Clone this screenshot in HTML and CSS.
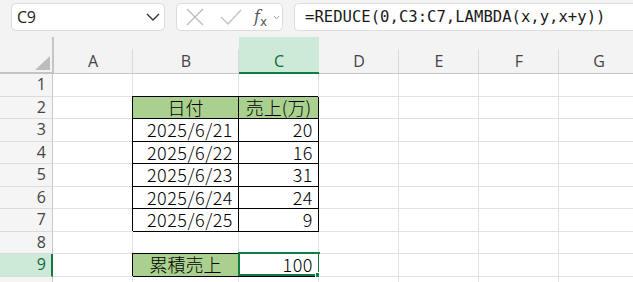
FILE: index.html
```html
<!DOCTYPE html>
<html lang="ja">
<head>
<meta charset="utf-8">
<title>Sheet</title>
<link rel="stylesheet" href="styles.css">
</head>
<body>
<div class="toolbar">
  <div class="namebox">
    <span class="ref">C9</span>
    <svg class="chev" width="14" height="8" viewBox="0 0 14 8"><path d="M1 1 L7 7 L13 1" fill="none" stroke="#333" stroke-width="1.4"/></svg>
  </div>
  <div class="fxbox">
    <svg class="ico" width="18" height="18" viewBox="0 0 18 18"><path d="M1 1 L17 17 M17 1 L1 17" stroke="#bdbdbd" stroke-width="1.4" fill="none"/></svg>
    <svg class="ico chk" width="22" height="16" viewBox="0 0 22 16"><path d="M1 8 L8 15 L21 1" stroke="#c4c4c4" stroke-width="1.4" fill="none"/></svg>
    <span class="fx"><i>f</i><sub>x</sub></span>
    <svg class="mini" width="7" height="5" viewBox="0 0 7 5"><path d="M1 1 L3.5 4 L6 1" stroke="#aaa" stroke-width="1" fill="none"/></svg>
  </div>
  <div class="formula">=REDUCE(0,C3:C7,LAMBDA(x,y,x+y))</div>
</div>
<div class="sheet">
  <div class="corner"></div>
  <div class="ch">A</div><div class="ch">B</div><div class="ch sel">C</div><div class="ch">D</div><div class="ch">E</div><div class="ch">F</div><div class="ch">G</div>

  <div class="rh">1</div><div class="c"></div><div class="c"></div><div class="c"></div><div class="c"></div><div class="c"></div><div class="c"></div><div class="c"></div>

  <div class="rh">2</div><div class="c"></div><div class="c bx hd ctr">日付</div><div class="c bx hd ctr">売上(万)</div><div class="c"></div><div class="c"></div><div class="c"></div><div class="c"></div>

  <div class="rh">3</div><div class="c"></div><div class="c bx num">2025/6/21</div><div class="c bx num">20</div><div class="c"></div><div class="c"></div><div class="c"></div><div class="c"></div>

  <div class="rh">4</div><div class="c"></div><div class="c bx num">2025/6/22</div><div class="c bx num">16</div><div class="c"></div><div class="c"></div><div class="c"></div><div class="c"></div>

  <div class="rh">5</div><div class="c"></div><div class="c bx num">2025/6/23</div><div class="c bx num">31</div><div class="c"></div><div class="c"></div><div class="c"></div><div class="c"></div>

  <div class="rh">6</div><div class="c"></div><div class="c bx num">2025/6/24</div><div class="c bx num">24</div><div class="c"></div><div class="c"></div><div class="c"></div><div class="c"></div>

  <div class="rh">7</div><div class="c"></div><div class="c bx num">2025/6/25</div><div class="c bx num">9</div><div class="c"></div><div class="c"></div><div class="c"></div><div class="c"></div>

  <div class="rh">8</div><div class="c"></div><div class="c"></div><div class="c"></div><div class="c"></div><div class="c"></div><div class="c"></div><div class="c"></div>

  <div class="rh sel">9</div><div class="c"></div><div class="c bx hd ctr">累積売上</div><div class="c bx num active">100</div><div class="c"></div><div class="c"></div><div class="c"></div><div class="c"></div>

  <div class="rh"></div><div class="c"></div><div class="c"></div><div class="c"></div><div class="c"></div><div class="c"></div><div class="c"></div><div class="c"></div>
</div>
</body>
</html>
```

FILE: styles.css
```css
html, body {
  margin: 0;
  padding: 0;
  background: #fff;
  overflow: hidden;
}
body {
  width: 633px;
  height: 282px;
  font-family: "Open Sans", "Noto Sans", sans-serif;
}
.toolbar {
  height: 37px;
  background: #f3f3f3;
  display: flex;
  align-items: flex-start;
  padding: 3px 0 0 11px;
  box-sizing: border-box;
  gap: 11px;
}
.namebox, .fxbox, .formula {
  height: 28px;
  box-sizing: border-box;
  background: #fff;
  border: 1px solid #dcdcdc;
  border-radius: 5px;
  display: flex;
  align-items: center;
}
.namebox {
  width: 154px;
  padding: 0 4px 0 5px;
  justify-content: space-between;
}
.ref {
  font-size: 16px;
  color: #222;
  letter-spacing: -0.3px;
}
.fxbox {
  width: 107px;
  padding-left: 9px;
}
.ico { display: block; }
.chk { margin-left: 16px; }
.fx {
  margin-left: 12px;
  font-family: "DejaVu Serif", serif;
  color: #555;
  font-size: 16px;
  line-height: 1;
  display: flex;
  align-items: flex-end;
}
.fx i { font-style: italic; }
.fx sub {
  font-family: "DejaVu Sans", sans-serif;
  font-size: 12px;
  vertical-align: baseline;
  position: relative;
  top: 3px;
}
.mini { margin-left: 6px; }
.formula {
  flex: 1;
  border-right: none;
  border-radius: 5px 0 0 5px;
  padding-left: 10px;
  font-family: "DejaVu Sans Mono", monospace;
  font-size: 15.6px;
  color: #1a1a1a;
}
.sheet {
  display: grid;
  grid-template-columns: 53px 80px 106px 80px 80px 80px 80px 80px;
  grid-template-rows: 37px 23px 22px 23px 22px 23px 22px 23px 22px 23px 22px;
  background: #f3f3f3;
}
.corner {
  background: #f3f3f3;
  border-right: 2px solid #c4c4c4;
  border-bottom: 2px solid #c4c4c4;
  box-sizing: border-box;
  position: relative;
  margin-right: -1px;
  z-index: 1;
}
.corner::after {
  content: "";
  position: absolute;
  right: 2px;
  bottom: 2px;
  width: 0;
  height: 0;
  border-left: 15px solid transparent;
  border-bottom: 14px solid #bdbdbd;
}
.ch {
  box-sizing: border-box;
  background: #f3f3f3 linear-gradient(#dadada, #dadada) right bottom / 1px 24px no-repeat;
  border-bottom: 1px solid #c8c8c8;
  display: flex;
  align-items: flex-end;
  justify-content: center;
  padding-bottom: 1px;
  font-size: 16px;
  line-height: 21px;
  color: #444;
}
.ch.sel {
  background: #cde9d7;
  border-bottom: 2px solid #107c41;
  color: #0f6b38;
  padding-bottom: 0;
}
.rh {
  box-sizing: border-box;
  background: #f5f5f5;
  border-right: 1px solid #c8c8c8;
  border-bottom: 1px solid #dcdcdc;
  text-align: right;
  padding-right: 6px;
  font-size: 16px;
  line-height: 21px;
  color: #444;
}
.rh.sel {
  background: #cde9d7;
  border-right: 2px solid #107c41;
  color: #0f6b38;
  padding-right: 5px;
}
.c {
  box-sizing: border-box;
  background: #fff;
  border-right: 1px solid #e1e1e1;
  border-bottom: 1px solid #e1e1e1;
  font-family: "Noto Sans CJK JP", sans-serif;
  font-weight: 300;
  font-size: 18px;
  line-height: 21px;
  color: #000;
  white-space: nowrap;
  position: relative;
}
.bx {
  border-right-color: #000;
  border-bottom-color: #000;
  box-shadow: -1px -1px 0 0 #000;
}
.hd { background: #a9d08e; }
.ctr { text-align: center; }
.num {
  text-align: right;
  padding-right: 5px;
  letter-spacing: 0.5px;
}
.active::before {
  content: "";
  position: absolute;
  left: -1px;
  top: -2px;
  right: -2px;
  bottom: 0;
  border: 2px solid #107c41;
  pointer-events: none;
}
.active::after {
  content: "";
  position: absolute;
  right: -4px;
  bottom: -3px;
  width: 5px;
  height: 5px;
  background: #107c41;
  border: 1px solid #fff;
}
```
